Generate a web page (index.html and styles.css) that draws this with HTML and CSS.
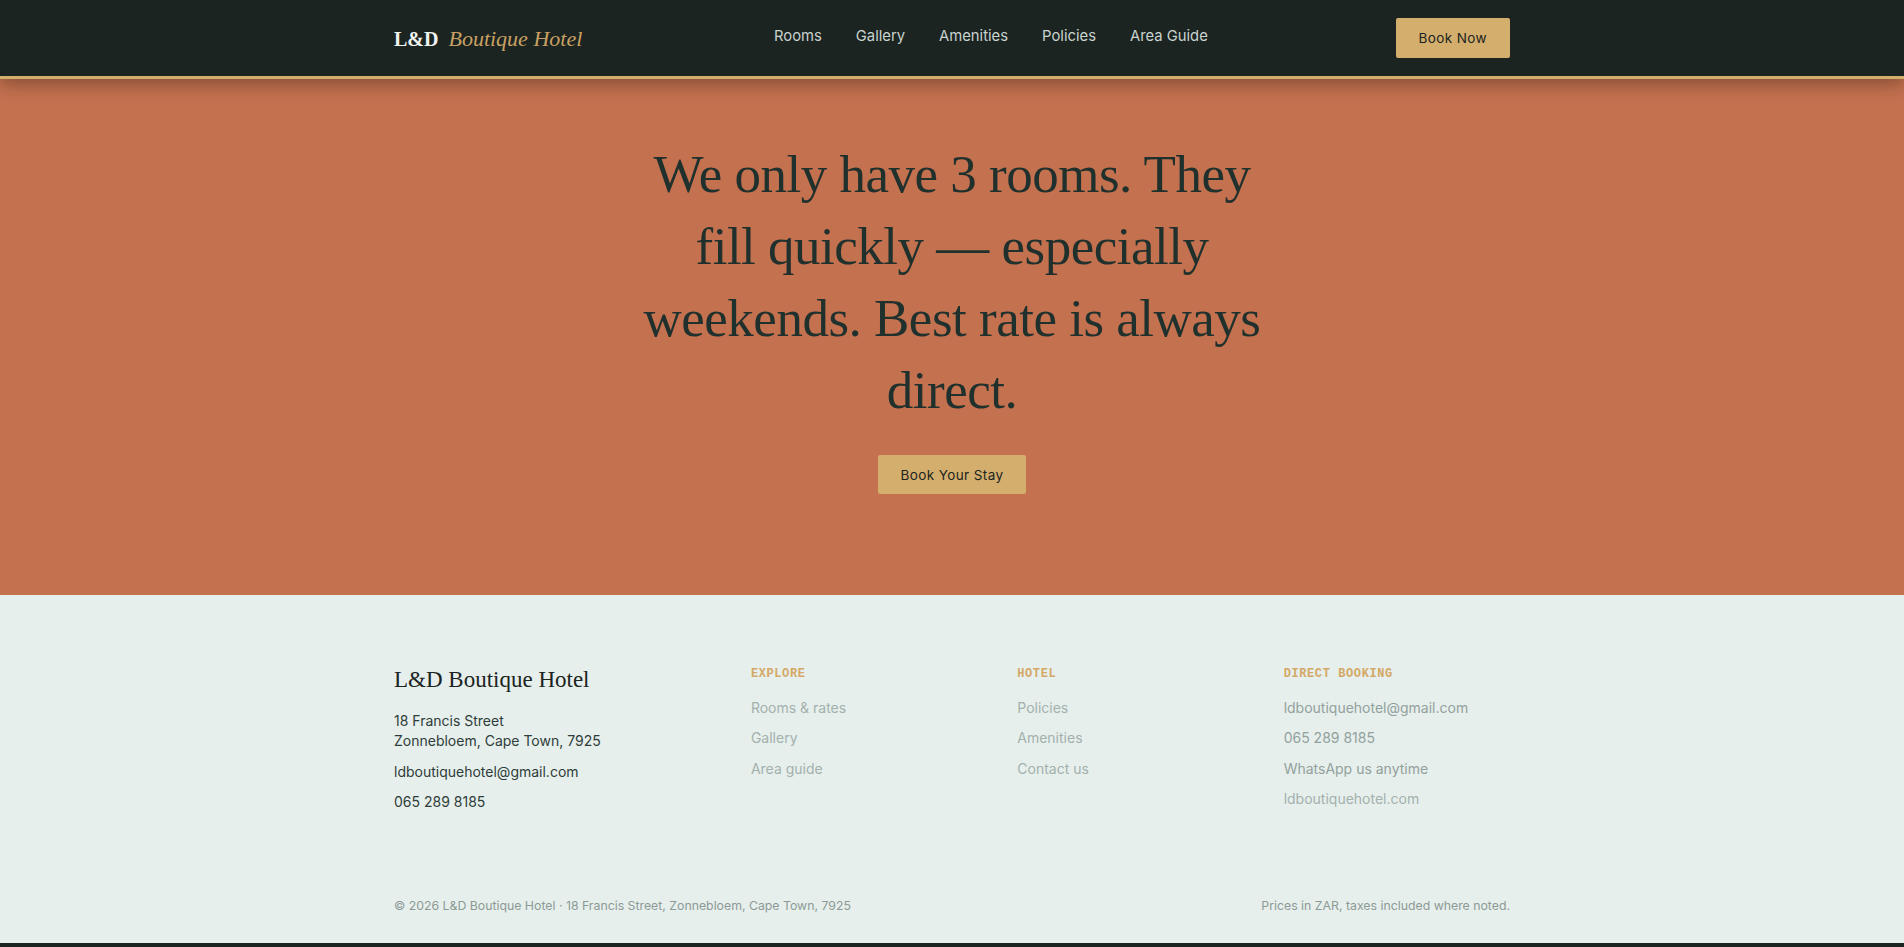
FILE: index.html
```html
<!DOCTYPE html>
<html lang="en">
<head>
    <meta charset="UTF-8">
    <meta name="viewport" content="width=device-width, initial-scale=1.0">
    <title>L&amp;D Boutique Hotel - Cape Town</title>
    <link rel="stylesheet" href="styles.css">
</head>
<body>
    <!-- Barra superior -->
    <header class="site-header">
        <div class="container header-inner">
            <a href="#" class="brand">L&amp;D <em>Boutique Hotel</em></a>

            <nav class="main-nav">
                <a href="#rooms">Rooms</a>
                <a href="#gallery">Gallery</a>
                <a href="#amenities">Amenities</a>
                <a href="#policies">Policies</a>
                <a href="#area">Area Guide</a>
            </nav>

            <a href="#book" class="btn">Book Now</a>
        </div>
    </header>

    <!-- Llamada a reservar -->
    <section class="hero">
        <div class="container hero-inner">
            <h1>We only have 3 rooms. They fill quickly — especially weekends. Best rate is always direct.</h1>
            <a href="#book" class="btn btn-hero">Book Your Stay</a>
        </div>
    </section>

    <!-- Pie de página -->
    <footer class="site-footer">
        <div class="container">
            <div class="footer-grid">
                <div class="footer-about">
                    <div class="footer-brand">L&amp;D Boutique Hotel</div>
                    <p>18 Francis Street<br>Zonnebloem, Cape Town, 7925</p>
                    <p>ldboutiquehotel@gmail.com</p>
                    <p>065 289 8185</p>
                </div>

                <div class="footer-col">
                    <h4>Explore</h4>
                    <ul>
                        <li><a href="#rooms">Rooms &amp; rates</a></li>
                        <li><a href="#gallery">Gallery</a></li>
                        <li><a href="#area">Area guide</a></li>
                    </ul>
                </div>

                <div class="footer-col">
                    <h4>Hotel</h4>
                    <ul>
                        <li><a href="#policies">Policies</a></li>
                        <li><a href="#amenities">Amenities</a></li>
                        <li><a href="#contact">Contact us</a></li>
                    </ul>
                </div>

                <div class="footer-col direct">
                    <h4>Direct booking</h4>
                    <ul>
                        <li><a href="mailto:ldboutiquehotel@gmail.com">ldboutiquehotel@gmail.com</a></li>
                        <li><a href="tel:0652898185">065 289 8185</a></li>
                        <li><a href="#whatsapp">WhatsApp us anytime</a></li>
                        <li><a href="#" class="site-link">ldboutiquehotel.com</a></li>
                    </ul>
                </div>
            </div>

            <div class="footer-bottom">
                <span>© 2026 L&amp;D Boutique Hotel · 18 Francis Street, Zonnebloem, Cape Town, 7925</span>
                <span>Prices in ZAR, taxes included where noted.</span>
            </div>
        </div>
    </footer>
</body>
</html>
```

FILE: styles.css
```css
body {
    margin: 0;
    font-family: Inter, "Liberation Sans", Arial, sans-serif;
    background: #1b2421;
    color: #1f302d;
}

a {
    text-decoration: none;
    color: inherit;
}

.container {
    max-width: 1116px;
    margin: 0 auto;
}

/* Barra superior */
.site-header {
    position: relative;
    z-index: 2;
    background: #1b2421;
    border-bottom: 3px solid #d4ae6d;
    box-shadow: 0 4px 18px rgba(0, 0, 0, 0.35);
}

.header-inner {
    height: 76px;
    display: flex;
    align-items: center;
    justify-content: space-between;
}

.brand {
    font-family: "Liberation Serif", "Times New Roman", serif;
    font-size: 20px;
    font-weight: bold;
    color: #eef2f0;
    margin-top: 1px;
}

.brand em {
    font-weight: normal;
    font-size: 22px;
    color: #c9a063;
    margin-left: 5px;
}

.main-nav {
    display: flex;
    gap: 34px;
    margin-left: 4px;
    margin-top: -4px;
}

.main-nav a {
    font-size: 14.8px;
    color: #c9d3cf;
}

.main-nav a:hover {
    color: #d4ae6d;
}

.btn {
    display: inline-flex;
    align-items: center;
    justify-content: center;
    height: 40px;
    padding: 0 23px;
    background: #d4ae6d;
    color: #1b2421;
    font-size: 13.5px;
    letter-spacing: 0.4px;
    border-radius: 2px;
    box-sizing: border-box;
}

.btn:hover {
    opacity: 0.9;
}

/* Llamada a reservar */
.hero {
    background: #c4714f;
    padding: 59px 0 101px;
}

.hero-inner {
    display: flex;
    flex-direction: column;
    align-items: center;
    text-align: center;
}

.hero h1 {
    max-width: 650px;
    margin: 0;
    font-family: "Liberation Serif", "Times New Roman", serif;
    font-size: 53px;
    font-weight: normal;
    line-height: 72px;
    letter-spacing: -0.5px;
    color: #1f302d;
}

.btn-hero {
    margin-top: 29px;
    height: 39px;
    padding: 0 22px;
}

/* Pie de página */
.site-footer {
    background: #e6efec;
    padding: 71px 0 28px;
}

.footer-grid {
    display: grid;
    grid-template-columns: 1.4fr 1fr 1fr 1fr;
    gap: 40px;
}

.footer-brand {
    font-family: "Liberation Serif", "Times New Roman", serif;
    font-size: 23px;
    line-height: 1.2;
    color: #1b2421;
    margin-bottom: 17px;
}

.footer-about p {
    margin: 0 0 10px;
    font-size: 14px;
    line-height: 20.5px;
    color: #2e3d3a;
}

.footer-col h4 {
    margin: 0 0 16px;
    font-family: "Liberation Mono", "Courier New", monospace;
    font-size: 12px;
    line-height: 16px;
    font-weight: bold;
    letter-spacing: 0.6px;
    text-transform: uppercase;
    color: #d4a866;
}

.footer-col ul {
    list-style: none;
    margin: 0;
    padding: 0;
}

.footer-col li {
    margin-bottom: 10.4px;
    font-size: 14px;
    line-height: 20px;
    color: #a3b1ad;
}

.footer-col.direct li {
    color: #92a19d;
}

.footer-col.direct .site-link {
    color: #a3b1ad;
}

.footer-col a:hover {
    color: #1f302d;
}

.footer-bottom {
    display: flex;
    justify-content: space-between;
    margin-top: 74px;
    font-size: 12.3px;
    line-height: 18px;
    color: #8c9a96;
}
```
